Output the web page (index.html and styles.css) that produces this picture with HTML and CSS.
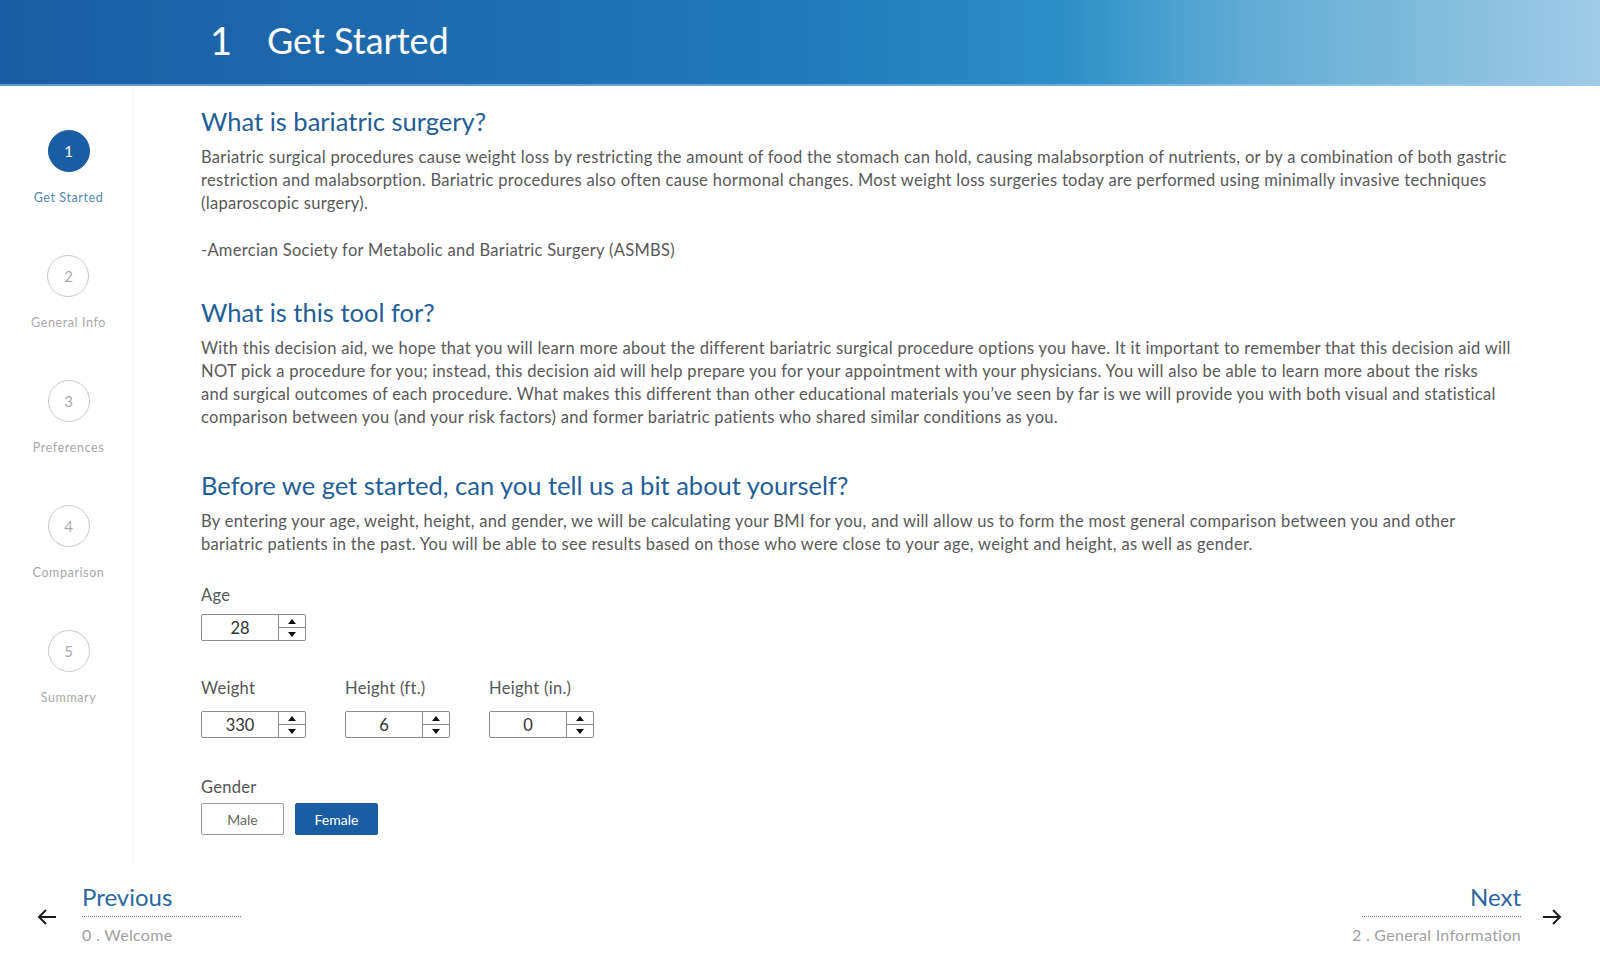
FILE: index.html
```html
<!DOCTYPE html>
<html lang="en">
<head>
<meta charset="utf-8">
<title>Get Started</title>
<link rel="stylesheet" href="styles.css">
</head>
<body>
<header class="topbar">
  <span class="topbar-num">1</span>
  <span class="topbar-title">Get Started</span>
</header>

<div class="layout">
  <nav class="steps">
    <div class="step active"><div class="step-circle">1</div><div class="step-label">Get Started</div></div>
    <div class="step"><div class="step-circle">2</div><div class="step-label">General Info</div></div>
    <div class="step"><div class="step-circle">3</div><div class="step-label">Preferences</div></div>
    <div class="step"><div class="step-circle">4</div><div class="step-label">Comparison</div></div>
    <div class="step"><div class="step-circle">5</div><div class="step-label">Summary</div></div>
  </nav>

  <main class="content">
    <h2 class="heading first">What is bariatric surgery?</h2>
    <p class="para">Bariatric surgical procedures cause weight loss by restricting the amount of food the stomach can hold, causing malabsorption of nutrients, or by a combination of both gastric<br>restriction and malabsorption. Bariatric procedures also often cause hormonal changes. Most weight loss surgeries today are performed using minimally invasive techniques<br>(laparoscopic surgery).</p>
    <p class="para cite">-Amercian Society for Metabolic and Bariatric Surgery (ASMBS)</p>

    <h2 class="heading second">What is this tool for?</h2>
    <p class="para">With this decision aid, we hope that you will learn more about the different bariatric surgical procedure options you have. It it important to remember that this decision aid will<br>NOT pick a procedure for you; instead, this decision aid will help prepare you for your appointment with your physicians. You will also be able to learn more about the risks<br>and surgical outcomes of each procedure. What makes this different than other educational materials you’ve seen by far is we will provide you with both visual and statistical<br>comparison between you (and your risk factors) and former bariatric patients who shared similar conditions as you.</p>

    <h2 class="heading third">Before we get started, can you tell us a bit about yourself?</h2>
    <p class="para">By entering your age, weight, height, and gender, we will be calculating your BMI for you, and will allow us to form the most general comparison between you and other<br>bariatric patients in the past. You will be able to see results based on those who were close to your age, weight and height, as well as gender.</p>

    <div class="form-row row-age">
      <div class="field">
        <label class="field-label label-age">Age</label>
        <div class="spin"><span class="spin-value">28</span><span class="spin-btns"><span class="spin-up"></span><span class="spin-down"></span></span></div>
      </div>
    </div>

    <div class="form-row row-body">
      <div class="field">
        <label class="field-label">Weight</label>
        <div class="spin"><span class="spin-value">330</span><span class="spin-btns"><span class="spin-up"></span><span class="spin-down"></span></span></div>
      </div>
      <div class="field">
        <label class="field-label">Height (ft.)</label>
        <div class="spin"><span class="spin-value">6</span><span class="spin-btns"><span class="spin-up"></span><span class="spin-down"></span></span></div>
      </div>
      <div class="field">
        <label class="field-label">Height (in.)</label>
        <div class="spin"><span class="spin-value">0</span><span class="spin-btns"><span class="spin-up"></span><span class="spin-down"></span></span></div>
      </div>
    </div>

    <div class="form-row row-gender">
      <div class="field">
        <label class="field-label label-gender">Gender</label>
        <div class="toggle">
          <button class="toggle-btn">Male</button>
          <button class="toggle-btn selected">Female</button>
        </div>
      </div>
    </div>
  </main>
</div>

<footer class="pager">
  <div class="pager-item prev">
    <svg class="arrow" width="20" height="16" viewBox="0 0 20 16"><path d="M19 8H2M9 1L2 8l7 7" fill="none" stroke="#1e1e1e" stroke-width="2"/></svg>
    <div class="pager-text">
      <div class="pager-title">Previous</div>
      <div class="pager-sub">0 . Welcome</div>
    </div>
  </div>
  <div class="pager-item next">
    <div class="pager-text">
      <div class="pager-title">Next</div>
      <div class="pager-sub">2 . General Information</div>
    </div>
    <svg class="arrow" width="20" height="16" viewBox="0 0 20 16"><path d="M1 8h17M11 1l7 7-7 7" fill="none" stroke="#1e1e1e" stroke-width="2"/></svg>
  </div>
</footer>
</body>
</html>
```

FILE: styles.css
```css
* { box-sizing: border-box; }

html, body {
  margin: 0;
  padding: 0;
  background: #ffffff;
}

body {
  width: 1600px;
  height: 972px;
  overflow: hidden;
  font-family: "Lato", "Noto Sans", sans-serif;
  color: #555555;
}

/* Header */
.topbar {
  height: 86px;
  display: flex;
  align-items: center;
  padding-left: 210px;
  padding-bottom: 4px;
  background: linear-gradient(90deg, #1a5da2 0%, #2279b8 50%, #2b8ec5 66%, #62abd5 78%, #9ecbe4 100%);
  border-bottom: 2px solid rgba(160, 205, 240, 0.55);
  color: #ffffff;
}

.topbar-num {
  font-size: 38px;
  font-weight: 400;
  width: 57px;
  line-height: 1;
}

.topbar-title {
  font-size: 36px;
  font-weight: 400;
  line-height: 1;
}

/* Layout */
.layout {
  display: flex;
}

.steps {
  width: 134px;
  flex: none;
  border-right: 1px solid #f6f6f6;
  padding-top: 44px;
  padding-left: 4px;
  height: 780px;
  display: flex;
  flex-direction: column;
  align-items: center;
}

.step {
  display: flex;
  flex-direction: column;
  align-items: center;
  height: 125px;
}

.step-circle {
  width: 42px;
  height: 42px;
  border-radius: 50%;
  border: 1.5px solid #c9c9c9;
  color: #ababab;
  display: flex;
  align-items: center;
  justify-content: center;
  font-size: 15px;
}

.step-label {
  margin-top: 18px;
  font-size: 12.5px;
  line-height: 16px;
  letter-spacing: 0.6px;
  color: #a8a8a8;
  white-space: nowrap;
}

.step.active .step-circle {
  background: #1a5da2;
  border-color: #1a5da2;
  color: #ffffff;
}

.step.active .step-label {
  color: #5286b6;
}

/* Content */
.content {
  padding-left: 67px;
  padding-top: 19px;
  flex: 1;
}

.heading {
  margin: 0;
  font-size: 25.5px;
  line-height: 32px;
  font-weight: 400;
  color: #1f5e98;
}

.heading.second { margin-top: 34px; }
.heading.third { margin-top: 40px; }

.para {
  margin: 9px 0 0;
  font-size: 16.5px;
  letter-spacing: 0.3px;
  line-height: 23px;
  color: #585858;
  white-space: nowrap;
}

.para.cite { margin-top: 24px; }

.form-row {
  display: flex;
  gap: 39px;
}

.row-age { margin-top: 29px; }
.row-body { margin-top: 37px; }
.row-gender { margin-top: 39px; }

.field {
  display: flex;
  flex-direction: column;
}

.field-label {
  font-size: 16.5px;
  letter-spacing: 0.3px;
  line-height: 20px;
  color: #555555;
  margin-bottom: 13px;
}

.label-age { margin-bottom: 9px; }
.label-gender { margin-bottom: 6px; }

.spin {
  width: 105px;
  height: 27px;
  border: 1px solid #8c8c8c;
  border-radius: 2px;
  display: flex;
}

.spin-value {
  flex: 1;
  display: flex;
  align-items: center;
  justify-content: center;
  font-size: 16.5px;
  color: #333333;
}

.spin-btns {
  width: 27px;
  border-left: 1px solid #8c8c8c;
  display: flex;
  flex-direction: column;
}

.spin-up, .spin-down {
  flex: 1;
  display: flex;
  align-items: center;
  justify-content: center;
}

.spin-up { border-bottom: 1px solid #8c8c8c; }

.spin-up::before {
  content: "";
  border-left: 4px solid transparent;
  border-right: 4px solid transparent;
  border-bottom: 5px solid #111111;
}

.spin-down::before {
  content: "";
  border-left: 4px solid transparent;
  border-right: 4px solid transparent;
  border-top: 5px solid #111111;
}

.toggle {
  display: flex;
  gap: 11px;
}

.toggle-btn {
  width: 83px;
  height: 32px;
  border: 1px solid #9a9a9a;
  border-radius: 2px;
  background: #ffffff;
  color: #666666;
  font-family: "Lato", "Noto Sans", sans-serif;
  font-size: 14px;
  padding: 0;
}

.toggle-btn.selected {
  background: #1a5da2;
  border-color: #1a5da2;
  color: #ffffff;
}

/* Footer pager */
.pager {
  display: flex;
  justify-content: space-between;
  padding: 0 38px 0 37px;
  margin-top: 17px;
}

.pager-item {
  display: flex;
  align-items: center;
  gap: 25px;
}

.pager-item.next { gap: 21px; }

.arrow {
  flex: none;
  margin-top: 5px;
}

.pager-text {
  width: 159px;
  display: flex;
  flex-direction: column;
  align-items: flex-start;
}

.next .pager-text { align-items: flex-end; }

.pager-title {
  align-self: stretch;
  font-size: 24px;
  line-height: 28px;
  color: #2a67a1;
  padding-bottom: 5px;
  border-bottom: 1px dotted #7a7a7a;
}

.next .pager-title { text-align: right; }

.pager-sub {
  margin-top: 8px;
  font-size: 16px;
  line-height: 20px;
  color: #a0a0a0;
  letter-spacing: 0.3px;
  white-space: nowrap;
}
```
